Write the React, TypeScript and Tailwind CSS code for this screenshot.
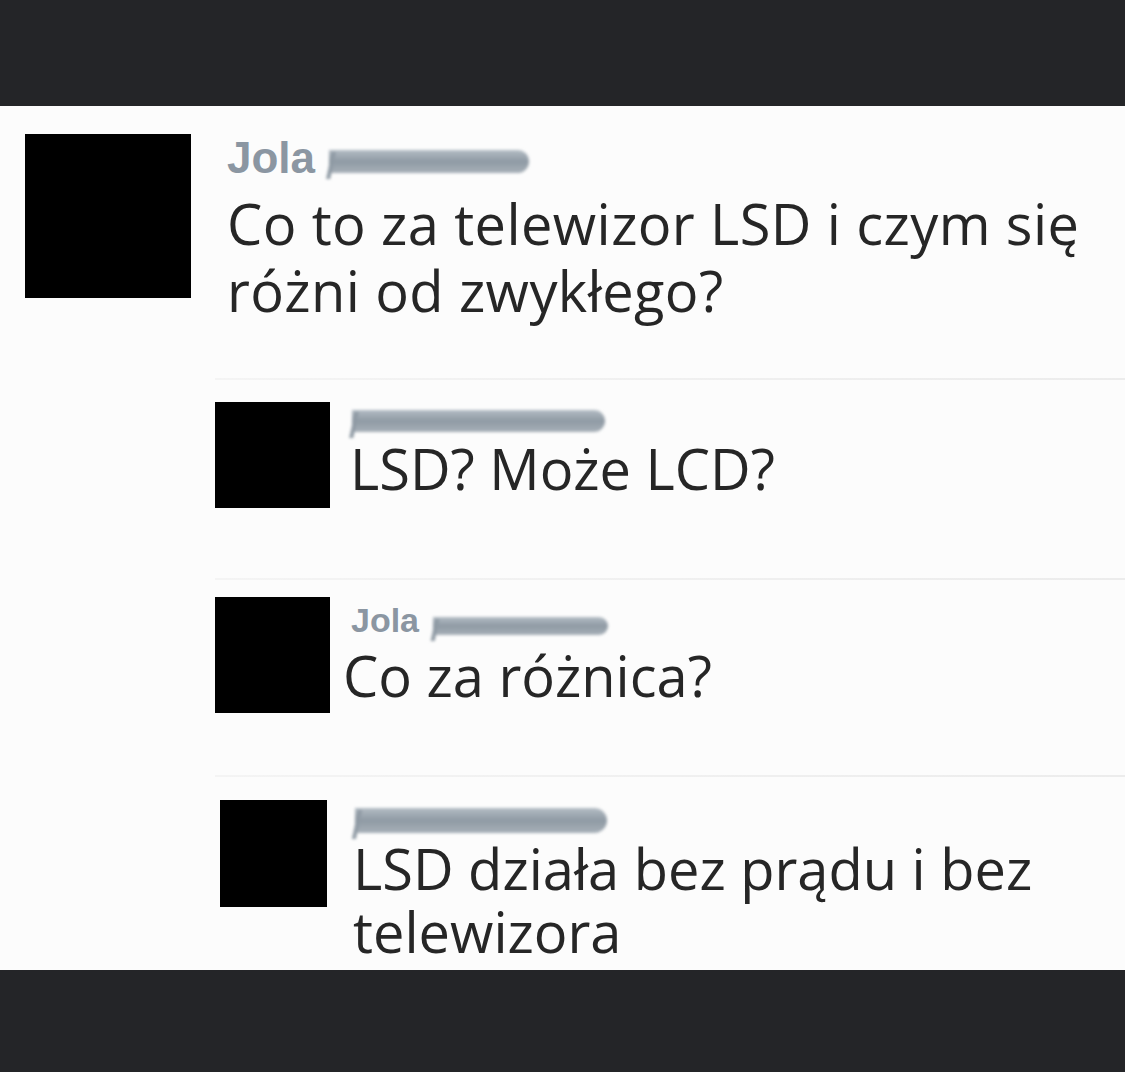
import React from 'react';

const body = "text-[#262626] text-[56px] [font-family:'Open_Sans','Noto_Sans',sans-serif]";
const nameCls = "text-[#8b96a2] font-bold [font-family:'Liberation_Sans',Arial,sans-serif]";
const rule = "h-[2px] bg-gradient-to-r from-[#f4f4f4] to-[#ececec]";

// blurred name smudge, slanted left end like the original blur
function Smudge({ className }: { className: string }) {
  return (
    <div className={`relative blur-[1.5px] ${className}`}>
      <div className="absolute inset-0 rounded-r-full bg-gradient-to-b from-[#b3bcc4] via-[#8f9aa4] to-[#a7b0b8]" />
      <div className="absolute left-0 top-[2px] w-[4px] h-[calc(100%+4px)] bg-[#8f9aa4] -skew-x-12" />
    </div>
  );
}

type ReplyProps = {
  avatar: string;
  gap: string;
  head: string;
  smudge: string;
  name?: boolean;
  text: React.ReactNode;
  leading: string;
  pad: string;
};

function Reply({ avatar, gap, head, smudge, name, text, leading, pad }: ReplyProps) {
  return (
    <div className={`flex items-start ${gap} ${pad}`}>
      <div className={`bg-black shrink-0 ${avatar}`} />
      <div className="flex flex-col">
        <div className={`flex items-start ${head}`}>
          {name && <span className={`${nameCls} text-[34px] leading-[36px] ml-[8px] mr-[14px]`}>Jola</span>}
          <Smudge className={smudge} />
        </div>
        <div className={`${body} ${leading}`}>{text}</div>
      </div>
    </div>
  );
}

export default function App() {
  return (
    <div className="w-[1125px] h-[1072px] bg-[#242528] flex flex-col overflow-hidden">
      <div className="h-[106px] shrink-0" />
      <div className="h-[864px] bg-[#fcfcfc] flex flex-col">
        {/* original post */}
        <div className="flex items-start gap-[36px] pl-[25px] pt-[28px]">
          <div className="w-[166px] h-[164px] bg-black shrink-0" />
          <div className="flex flex-col">
            <div className="flex items-start h-[56px]">
              <span className={`${nameCls} text-[44px] leading-[48px] mr-[14px]`}>Jola</span>
              <Smudge className="w-[200px] h-[23px] mt-[16px]" />
            </div>
            <div className={`${body} leading-[67px] tracking-[0.4px]`}>
              Co to za telewizor LSD i czym się<br />różni od zwykłego?
            </div>
          </div>
        </div>

        {/* replies */}
        <div className="ml-[215px] mt-[54px]">
          <div className={rule} />
          <Reply
            avatar="w-[115px] h-[106px]"
            gap="gap-[20px]"
            head="h-[33px] pt-[8px] pl-[2px]"
            smudge="w-[253px] h-[22px]"
            leading="leading-[66px]"
            pad="pt-[22px] pb-[70px]"
            text="LSD? Może LCD?"
          />
          <div className={rule} />
          <Reply
            avatar="w-[115px] h-[116px]"
            gap="gap-[13px]"
            head="h-[45px] pt-[5px]"
            smudge="w-[175px] h-[18px] mt-[15px]"
            name
            leading="leading-[66px]"
            pad="pt-[17px] pb-[62px]"
            text="Co za różnica?"
          />
          <div className={rule} />
          <Reply
            avatar="w-[107px] h-[107px] ml-[5px]"
            gap="gap-[26px]"
            head="h-[37px] pt-[8px] pl-[2px]"
            smudge="w-[252px] h-[25px]"
            leading="leading-[63px]"
            pad="pt-[23px]"
            text={<>LSD działa bez prądu i bez<br />telewizora</>}
          />
        </div>
      </div>
      <div className="flex-1" />
    </div>
  );
}
